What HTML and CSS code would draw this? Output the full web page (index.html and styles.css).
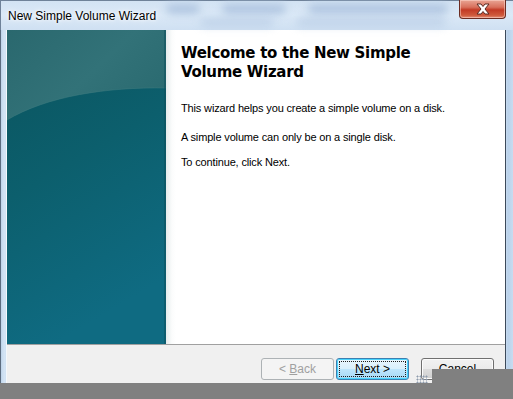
FILE: index.html
```html
<!doctype html>
<html>
<head>
<meta charset="UTF-8">
<title>New Simple Volume Wizard</title>
<link rel="stylesheet" href="styles.css">
</head>
<body>
<div class="window">
  <div class="titlebar">
    <span class="title">New Simple Volume Wizard</span>
    <div class="glass">
      <div class="glass-row">
        <span class="smudge s1"></span>
        <span class="smudge s2"></span>
        <span class="smudge s3"></span>
      </div>
      <div class="glass-row low">
        <span class="smudge s4"></span>
        <span class="smudge s5"></span>
      </div>
    </div>
    <div class="close">
      <svg width="18" height="12" viewBox="0 0 18 12">
        <path d="M3 1 L7 1 L9 3.5 L11 1 L15 1 L11 6 L15 11 L11 11 L9 8.5 L7 11 L3 11 L7 6 Z" fill="#fff" stroke="#5a2a22" stroke-width="1"/>
      </svg>
    </div>
  </div>

  <div class="client">
    <div class="main">
      <div class="banner">
        <svg width="159" height="314" viewBox="0 0 159 314" preserveAspectRatio="none">
          <defs>
            <linearGradient id="deep" x1="0" y1="0" x2="0.3" y2="1">
              <stop offset="0" stop-color="#0a535d"/>
              <stop offset="0.5" stop-color="#0c5f6d"/>
              <stop offset="1" stop-color="#0f6b82"/>
            </linearGradient>
            <linearGradient id="cap" x1="0" y1="0" x2="1" y2="0.6">
              <stop offset="0" stop-color="#2a686e"/>
              <stop offset="0.6" stop-color="#327278"/>
              <stop offset="1" stop-color="#2b6b71"/>
            </linearGradient>
          </defs>
          <rect x="0" y="0" width="159" height="314" fill="url(#deep)"/>
          <path d="M0 0 L159 0 L159 58 C 100 57 40 66 0 90 Z" fill="url(#cap)"/>
          <path d="M0 90 C 40 66 100 57 159 58" fill="none" stroke="#3d7c80" stroke-width="1" opacity="0.5"/>
          <rect x="157" y="0" width="2" height="314" fill="#0b4e5a" opacity="0.5"/>
        </svg>
      </div>
      <div class="content">
        <h1>Welcome to the New Simple Volume Wizard</h1>
        <p class="intro">This wizard helps you create a simple volume on a disk.</p>
        <p class="rule">A simple volume can only be on a single disk.</p>
        <p class="hint">To continue, click Next.</p>
      </div>
    </div>
    <div class="footer">
      <button class="btn back" disabled>&lt; <u>B</u>ack</button>
      <button class="btn next"><span class="focus"><u>N</u>ext &gt;</span></button>
      <button class="btn cancel">Cancel</button>
    </div>
  </div>
</div>

<div class="grip"></div>
<div class="cover"></div>
<div class="band"></div>
</body>
</html>
```

FILE: styles.css
```css
html, body {
	margin: 0;
	height: 100%;
}

body {
	width: 513px;
	height: 399px;
	overflow: hidden;
	position: relative;
	background: #808080;
	font-family: "Liberation Sans", Arial, sans-serif;
}

.window {
	width: 513px;
	height: 399px;
	display: flex;
	flex-direction: column;
	background: linear-gradient(to right, #a9c2dc 0, #c9dcef 2px, #d6e6f6 5px, #c3d7ec 7px, #cfe0f2 505px, #b9d1ea 508px, #c7dcf0 513px);
	box-shadow: inset 1px 0 0 #5d6d80;
}

/* title bar */
.titlebar {
	height: 30px;
	display: flex;
	align-items: flex-start;
	background: linear-gradient(to bottom, #d2e2f3 0, #dbe9f7 50%, #cfe0f2 100%);
	box-shadow: inset 1px 1px 0 #6f8299;
}

.title {
	font-size: 12px;
	color: #000;
	padding: 9px 0 0 8px;
	white-space: nowrap;
	text-shadow: 0 0 6px #fff, 0 0 3px #fff;
}

.glass {
	flex: 1;
	display: flex;
	flex-direction: column;
	gap: 3px;
	padding: 4px 0 0 10px;
}

.glass-row {
	display: flex;
	gap: 22px;
}

.glass-row.low {
	padding-left: 34px;
	opacity: 0.5;
}

.smudge {
	height: 10px;
	background: #afc5e0;
	border-radius: 5px;
	filter: blur(4px);
}

.s1 { width: 34px; }
.s2 { width: 64px; }
.s3 { width: 140px; }
.s4 { width: 74px; }
.s5 { width: 150px; }

.close {
	width: 45px;
	height: 18px;
	margin-right: 7px;
	margin-left: 8px;
	display: flex;
	align-items: center;
	justify-content: center;
	border: 1px solid #6b2c22;
	border-top: 0;
	border-radius: 0 0 4px 4px;
	background: linear-gradient(to bottom, #e9a594 0, #d8705c 40%, #c23a25 55%, #cf5a3c 85%, #e3907a 100%);
	box-shadow: inset 0 0 0 1px rgba(255, 220, 210, 0.5);
}

/* client area */
.client {
	flex: 1;
	margin: 0 7px 0 7px;
	display: flex;
	flex-direction: column;
	background: #f0f0f0;
	border-right: 1px solid #3c4a5a;
	box-shadow: -1px 0 0 #f4f8fc;
}

.main {
	height: 314px;
	display: flex;
	background: #fff;
	border-bottom: 1px solid #a0a0a0;
}

.banner {
	width: 159px;
	height: 314px;
}

.banner svg {
	display: block;
}

.content {
	flex: 1;
	padding: 14px 0 0 15px;
	background: linear-gradient(to right, #e6ecec 0, #fbfcfc 6px, #fff 10px);
}

h1 {
	font-family: "DejaVu Sans", Verdana, sans-serif;
	font-weight: bold;
	font-size: 15px;
	line-height: 19px;
	letter-spacing: -0.3px;
	width: 250px;
	margin: 0 0 19px;
	color: #000;
}

p {
	font-size: 11px;
	line-height: 15px;
	letter-spacing: -0.15px;
	margin: 0;
	color: #000;
}

.rule {
	margin-top: 14px;
}

.hint {
	margin-top: 10px;
}

/* buttons */
.footer {
	flex: 1;
	display: flex;
	justify-content: flex-end;
	align-items: flex-start;
	padding: 13px 11px 0 0;
}

.btn {
	width: 73px;
	height: 22px;
	padding: 0;
	font-family: "Liberation Sans", Arial, sans-serif;
	font-size: 12px;
	color: #000;
	border: 1px solid #707070;
	border-radius: 3px;
	background: linear-gradient(to bottom, #f2f2f2 0, #ebebeb 50%, #dddddd 51%, #cfcfcf 100%);
	box-shadow: inset 0 0 0 1px #fcfcfc;
}

.btn.back {
	color: #a0a0a0;
	border-color: #adb2b5;
	background: #f4f4f4;
	box-shadow: none;
}

.btn.next {
	margin-left: 2px;
	border-color: #3c7fb1;
	background: linear-gradient(to bottom, #eaf6fd 0, #d9f0fc 50%, #bee6fd 51%, #a7d9f5 100%);
	box-shadow: inset 0 0 0 1px #48d4fd;
	padding: 2px;
}

.btn.next .focus {
	display: flex;
	align-items: center;
	justify-content: center;
	height: 100%;
	border: 1px dotted #202020;
	box-sizing: border-box;
}

.btn.cancel {
	margin-left: 12px;
}

/* things lying over the window */
.grip {
	position: absolute;
	left: 416px;
	top: 375px;
	width: 12px;
	height: 8px;
	background: radial-gradient(circle, #8c9aab 0.8px, transparent 1.2px) 0 0 / 3px 3px;
}

.cover {
	position: absolute;
	left: 432px;
	top: 369px;
	width: 81px;
	height: 30px;
	background: #808080;
}

.band {
	position: absolute;
	left: 0;
	top: 383px;
	width: 513px;
	height: 16px;
	background: #808080;
}
```
